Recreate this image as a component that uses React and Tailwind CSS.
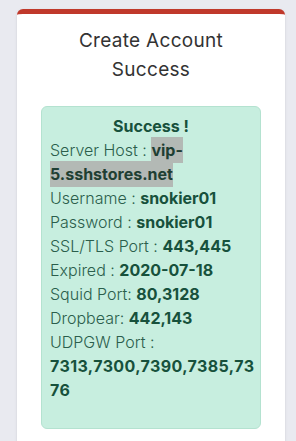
const rows = [
  { label: "Username : ", value: "snokier01" },
  { label: "Password : ", value: "snokier01" },
  { label: "SSL/TLS Port : ", value: "443,445" },
  { label: "Expired : ", value: "2020-07-18" },
  { label: "Squid Port: ", value: "80,3128" },
  { label: "Dropbear: ", value: "442,143" },
];

export default function App() {
  return (
    <div
      className="min-h-[441px] bg-[#e9eaf0] pt-[9px] pl-[17px] pr-[11px] text-[#333]"
      style={{ fontFamily: "Inter, sans-serif" }}
    >
      <div className="bg-white rounded-t-md border-t-[5px] border-[#c0392b] min-h-[432px] px-6 pb-4 shadow-sm">
        {/* Header */}
        <h2 className="text-center text-[19px] leading-[29px] font-normal pt-[12px] pb-[22px] text-[#333] tracking-[0.3px]">
          Create Account
          <br />
          Success
        </h2>

        {/* Result */}
        <div className="bg-[#c7eedf] border border-[#b4e2d0] rounded-md pl-2 pr-0 pt-[7px] pb-[26px] text-[16px] leading-6 text-[#2b5e4c]">
          <div className="text-center font-bold text-[#17513c] pr-2">Success !</div>
          <div className="font-light">
            Server Host :{" "}
            <span className="font-bold text-[#1f3f33] bg-[#b3b9b5] py-[3px] [box-decoration-break:clone]">
              vip-5.sshstores.net
            </span>
          </div>
          {rows.map((r) => (
            <div key={r.label} className="font-light">
              {r.label}
              <span className="font-bold text-[#17513c]">{r.value}</span>
            </div>
          ))}
          <div className="font-light">UDPGW Port :</div>
          <div className="font-bold text-[#17513c] break-all tracking-[0.4px]">
            7313,7300,7390,7385,7376
          </div>
        </div>
      </div>
    </div>
  );
}
